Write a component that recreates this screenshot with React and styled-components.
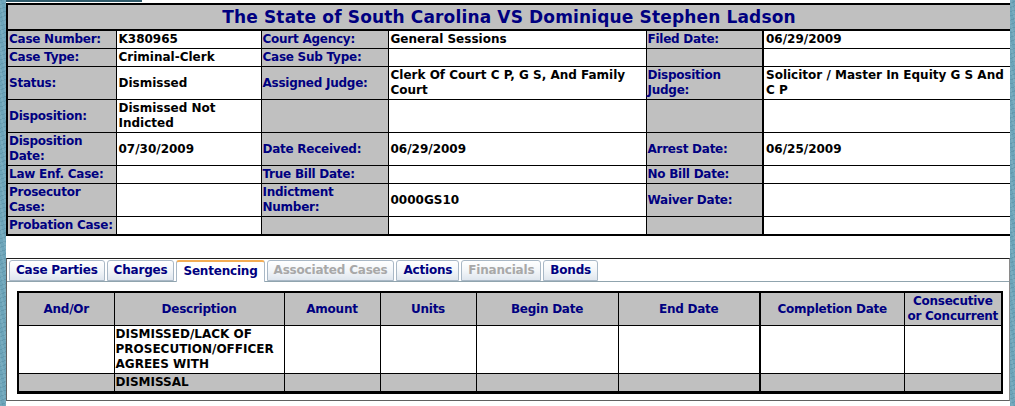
import React from "react";
import styled, { createGlobalStyle } from "styled-components";

const GlobalStyle = createGlobalStyle`
  html, body {
    margin: 0;
    padding: 0;
  }
  body {
    background-color: #6da5ba;
    background-image:
      repeating-linear-gradient(77deg, rgba(255,255,255,0.08) 0 2px, transparent 2px 5px),
      repeating-linear-gradient(160deg, rgba(20,60,80,0.12) 0 1px, transparent 1px 4px);
    font-family: "DejaVu Sans", Verdana, sans-serif;
  }
`;

const Page = styled.div`
  margin: 0 5px 0 6px;
  height: 406px;
  background: #fff;
  overflow: hidden;
`;

const TopStrip = styled.div`
  width: 136px;
  height: 2px;
  background: #2f5b6b;
  margin-bottom: 1px;
`;

const Col = styled.col`
  width: ${(p) => p.$w}px;
`;

const CaseTable = styled.table`
  width: 100%;
  table-layout: fixed;
  border-collapse: collapse;
  border: 2px solid #000;
  font-size: 12px;
  font-weight: bold;
  line-height: 15px;
`;

const TitleCell = styled.th`
  background: #c0c0c0;
  color: #000080;
  font-size: 17px;
  letter-spacing: 0.15px;
  line-height: 21px;
  height: 21px;
  padding: 2px 0 1px;
  text-align: center;
  border: 2px solid #000;
`;

const Label = styled.td`
  background: #c0c0c0;
  color: #000080;
  letter-spacing: -0.25px;
  padding: 1px 0 1px 1px;
  border: 1px solid #000;
  vertical-align: middle;
`;

const Value = styled.td`
  background: #fff;
  color: #000;
  padding: 1px 1px 1px 2px;
  border: 1px solid #000;
  border-left-width: ${(p) => (p.$thick ? "2px" : "1px")};
  vertical-align: middle;
`;

const Spacer = styled.div`
  height: 22px;
`;

const Panel = styled.div`
  border: 1px solid #606060;
  border-top-color: #202020;
  border-right-color: #8a8a8a;
  height: 143px;
  box-sizing: border-box;
`;

const TabBar = styled.div`
  display: flex;
  gap: 2px;
  padding: 1px 0 0 2px;
  border-bottom: 1px solid #90a4ae;
  height: 23px;
  box-sizing: border-box;
`;

const Tab = styled.div`
  font-size: 12px;
  font-weight: bold;
  letter-spacing: -0.2px;
  line-height: 19px;
  padding: 0 6px;
  margin-bottom: ${(p) => (p.$active ? "-1px" : "0")};
  border: 1px solid #a9b8c6;
  border-bottom: ${(p) => (p.$active ? "none" : "1px solid #a9b8c6")};
  border-top: ${(p) => (p.$active ? "2px solid #f3ad55" : "1px solid #a9b8c6")};
  border-radius: 3px 3px 0 0;
  color: ${(p) => (p.$disabled ? "#a8a8a8" : "#000080")};
  background: ${(p) =>
    p.$active ? "#fff" : "linear-gradient(#ffffff, #f3f6f9 50%, #dfe6ee)"};
  white-space: nowrap;
`;

const SentTable = styled.table`
  width: 984px;
  margin: 9px 0 0 10px;
  table-layout: fixed;
  border-collapse: collapse;
  border: 2px solid #000;
  border-bottom-width: 3px;
  font-size: 12px;
  font-weight: bold;
  line-height: 15px;
`;

const HeadCell = styled.th`
  background: #c0c0c0;
  color: #000080;
  letter-spacing: -0.25px;
  text-align: center;
  border: 1px solid #000;
  border-left-width: ${(p) => (p.$thick ? "2px" : "1px")};
  padding: 1px 1px;
  height: 30px;
`;

const DataCell = styled.td`
  background: ${(p) => (p.$shade ? "#c0c0c0" : "#fff")};
  color: #000;
  border: 1px solid #000;
  border-left-width: ${(p) => (p.$thick ? "2px" : "1px")};
  padding: 1px 0 1px 1px;
  vertical-align: middle;
`;

const caseCols = [109, 145, 127, 258, 117, 248];

const caseRows = [
  [["Case Number:", "K380965"], ["Court Agency:", "General Sessions"], ["Filed Date:", "06/29/2009"]],
  [["Case Type:", "Criminal-Clerk"], ["Case Sub Type:", ""], ["", ""]],
  [["Status:", "Dismissed"], ["Assigned Judge:", "Clerk Of Court C P, G S, And Family Court"], ["Disposition Judge:", "Solicitor / Master In Equity G S And C P"]],
  [["Disposition:", "Dismissed Not Indicted"], ["", ""], ["", ""]],
  [["Disposition Date:", "07/30/2009"], ["Date Received:", "06/29/2009"], ["Arrest Date:", "06/25/2009"]],
  [["Law Enf. Case:", ""], ["True Bill Date:", ""], ["No Bill Date:", ""]],
  [["Prosecutor Case:", ""], ["Indictment Number:", "0000GS10"], ["Waiver Date:", ""]],
  [["Probation Case:", ""], ["", ""], ["", ""]],
];

const tabs = [
  { name: "Case Parties" },
  { name: "Charges" },
  { name: "Sentencing", active: true },
  { name: "Associated Cases", disabled: true },
  { name: "Actions" },
  { name: "Financials", disabled: true },
  { name: "Bonds" },
];

const sentCols = [
  { title: "And/Or", w: 96 },
  { title: "Description", w: 170 },
  { title: "Amount", w: 96 },
  { title: "Units", w: 96 },
  { title: "Begin Date", w: 142 },
  { title: "End Date", w: 142 },
  { title: "Completion Date", w: 144, thick: true },
  { title: "Consecutive or Concurrent", w: 98 },
];

const sentRows = [
  { cells: ["", "DISMISSED/LACK OF PROSECUTION/OFFICER AGREES WITH", "", "", "", "", "", ""] },
  { cells: ["", "DISMISSAL", "", "", "", "", "", ""], shade: true },
];

export default function App() {
  return (
    <>
      <GlobalStyle />
      <Page>
        <TopStrip />
        <CaseTable>
          <colgroup>
            {caseCols.map((w, i) => (
              <Col key={i} $w={w} />
            ))}
          </colgroup>
          <thead>
            <tr>
              <TitleCell colSpan={6}>
                The State of South Carolina VS Dominique Stephen Ladson
              </TitleCell>
            </tr>
          </thead>
          <tbody>
            {caseRows.map((row, i) => (
              <tr key={i}>
                {row.map(([label, value], j) => (
                  <React.Fragment key={j}>
                    <Label>{label}</Label>
                    <Value $thick={j === 2}>{value}</Value>
                  </React.Fragment>
                ))}
              </tr>
            ))}
          </tbody>
        </CaseTable>
        <Spacer />
        <Panel>
          <TabBar>
            {tabs.map((t) => (
              <Tab key={t.name} $active={t.active} $disabled={t.disabled}>
                {t.name}
              </Tab>
            ))}
          </TabBar>
          <SentTable>
            <colgroup>
              {sentCols.map((c) => (
                <Col key={c.title} $w={c.w} />
              ))}
            </colgroup>
            <thead>
              <tr>
                {sentCols.map((c) => (
                  <HeadCell key={c.title} $thick={c.thick}>
                    {c.title}
                  </HeadCell>
                ))}
              </tr>
            </thead>
            <tbody>
              {sentRows.map((r, i) => (
                <tr key={i}>
                  {r.cells.map((c, j) => (
                    <DataCell key={j} $shade={r.shade} $thick={sentCols[j].thick}>
                      {c}
                    </DataCell>
                  ))}
                </tr>
              ))}
            </tbody>
          </SentTable>
        </Panel>
      </Page>
    </>
  );
}
